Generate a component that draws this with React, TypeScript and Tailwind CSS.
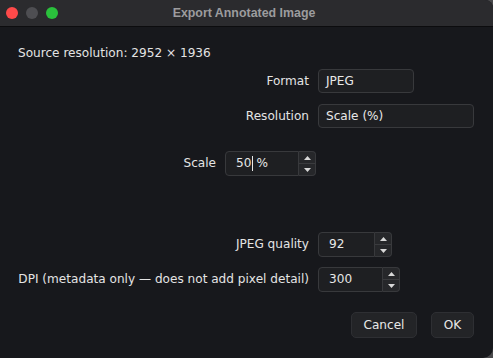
import React from "react";

const font = { fontFamily: '"DejaVu Sans", Verdana, sans-serif' };

function Spin({ width, children }: { width: string; children: React.ReactNode }) {
  return (
    <div className={`flex h-[25px] ${width}`}>
      <div className="flex-1 flex items-center pl-[10px] bg-[#1e1f22] border border-[#38393c] rounded-l-[4px] text-[#e8e8e8]">
        {children}
      </div>
      <div className="w-[17px] flex flex-col bg-[#26272a] border border-l-0 border-[#38393c] rounded-r-[4px]">
        <div className="flex-1 flex items-center justify-center border-b border-[#3a3b3e]">
          <svg width="7" height="4" viewBox="0 0 7 4"><path d="M0 4 L3.5 0 L7 4 Z" fill="#d8d8d8" /></svg>
        </div>
        <div className="flex-1 flex items-center justify-center">
          <svg width="7" height="4" viewBox="0 0 7 4"><path d="M0 0 L3.5 4 L7 0 Z" fill="#d8d8d8" /></svg>
        </div>
      </div>
    </div>
  );
}

export default function App() {
  return (
    <div className="w-[493px] h-[358px] bg-[#4a4a4c] text-[12.1px]" style={font}>
      <div className="w-[493px] h-[358px] bg-[#17181c] rounded-br-[10px] rounded-tr-[8px] overflow-hidden flex flex-col">
        <div className="h-[27px] bg-[#2b2b2e] border-b border-[#0c0c0e] flex items-center relative">
          <div className="flex gap-[8px] pl-[6px]">
            <div className="w-[12px] h-[12px] rounded-full bg-[#fe4a4a]" />
            <div className="w-[12px] h-[12px] rounded-full bg-[#4e4e52]" />
            <div className="w-[12px] h-[12px] rounded-full bg-[#2ac13c]" />
          </div>
          <div
            className="absolute inset-0 flex items-center justify-center text-[12.4px] font-bold text-[#9c9c9e] pr-[5px]"
            style={{ fontFamily: '"Liberation Sans", Arial, sans-serif' }}
          >
            Export Annotated Image
          </div>
        </div>
        <div className="pl-[18px] pt-[19px] text-[#e4e4e4]">
          <div className="h-[15px] leading-[15px]">Source resolution: 2952 × 1936</div>
          <div className="mt-[8px] flex items-center h-[24px]">
            <div className="w-[291px] text-right pr-0">Format</div>
            <div className="ml-[9px] w-[96px] h-[24px] flex items-center pl-[7px] bg-[#1e1f22] border border-[#38393c] rounded-[4px] text-[#e8e8e8]">JPEG</div>
          </div>
          <div className="mt-[11px] flex items-center h-[24px]">
            <div className="w-[291px] text-right">Resolution</div>
            <div className="ml-[9px] w-[156px] h-[24px] flex items-center pl-[7px] bg-[#1e1f22] border border-[#38393c] rounded-[4px] text-[#e8e8e8]">Scale (%)</div>
          </div>
          <div className="mt-[23px] flex items-center h-[25px]">
            <div className="w-[198px] text-right">Scale</div>
            <div className="ml-[9px]">
              <Spin width="w-[91px]">
                <span>50</span>
                <span className="inline-block w-[1px] h-[15px] bg-[#e8e8e8] ml-[1px]" />
                <span className="ml-[3px]">%</span>
              </Spin>
            </div>
          </div>
          <div className="mt-[56px] flex items-center h-[25px]">
            <div className="w-[291px] text-right">JPEG quality</div>
            <div className="ml-[9px]">
              <Spin width="w-[74px]">92</Spin>
            </div>
          </div>
          <div className="mt-[10px] flex items-center h-[25px]">
            <div className="w-[291px] text-right whitespace-nowrap">DPI (metadata only — does not add pixel detail)</div>
            <div className="ml-[9px]">
              <Spin width="w-[82px]">300</Spin>
            </div>
          </div>
          <div className="mt-[20px] flex justify-end pr-[19px] gap-[14px]">
            <div className="w-[66px] h-[26px] flex items-center justify-center bg-[#232427] border border-[#2e2f33] rounded-[5px] text-[#e8e8e8]">Cancel</div>
            <div className="w-[43px] h-[26px] flex items-center justify-center bg-[#232427] border border-[#2e2f33] rounded-[5px] text-[#e8e8e8]">OK</div>
          </div>
        </div>
      </div>
    </div>
  );
}
